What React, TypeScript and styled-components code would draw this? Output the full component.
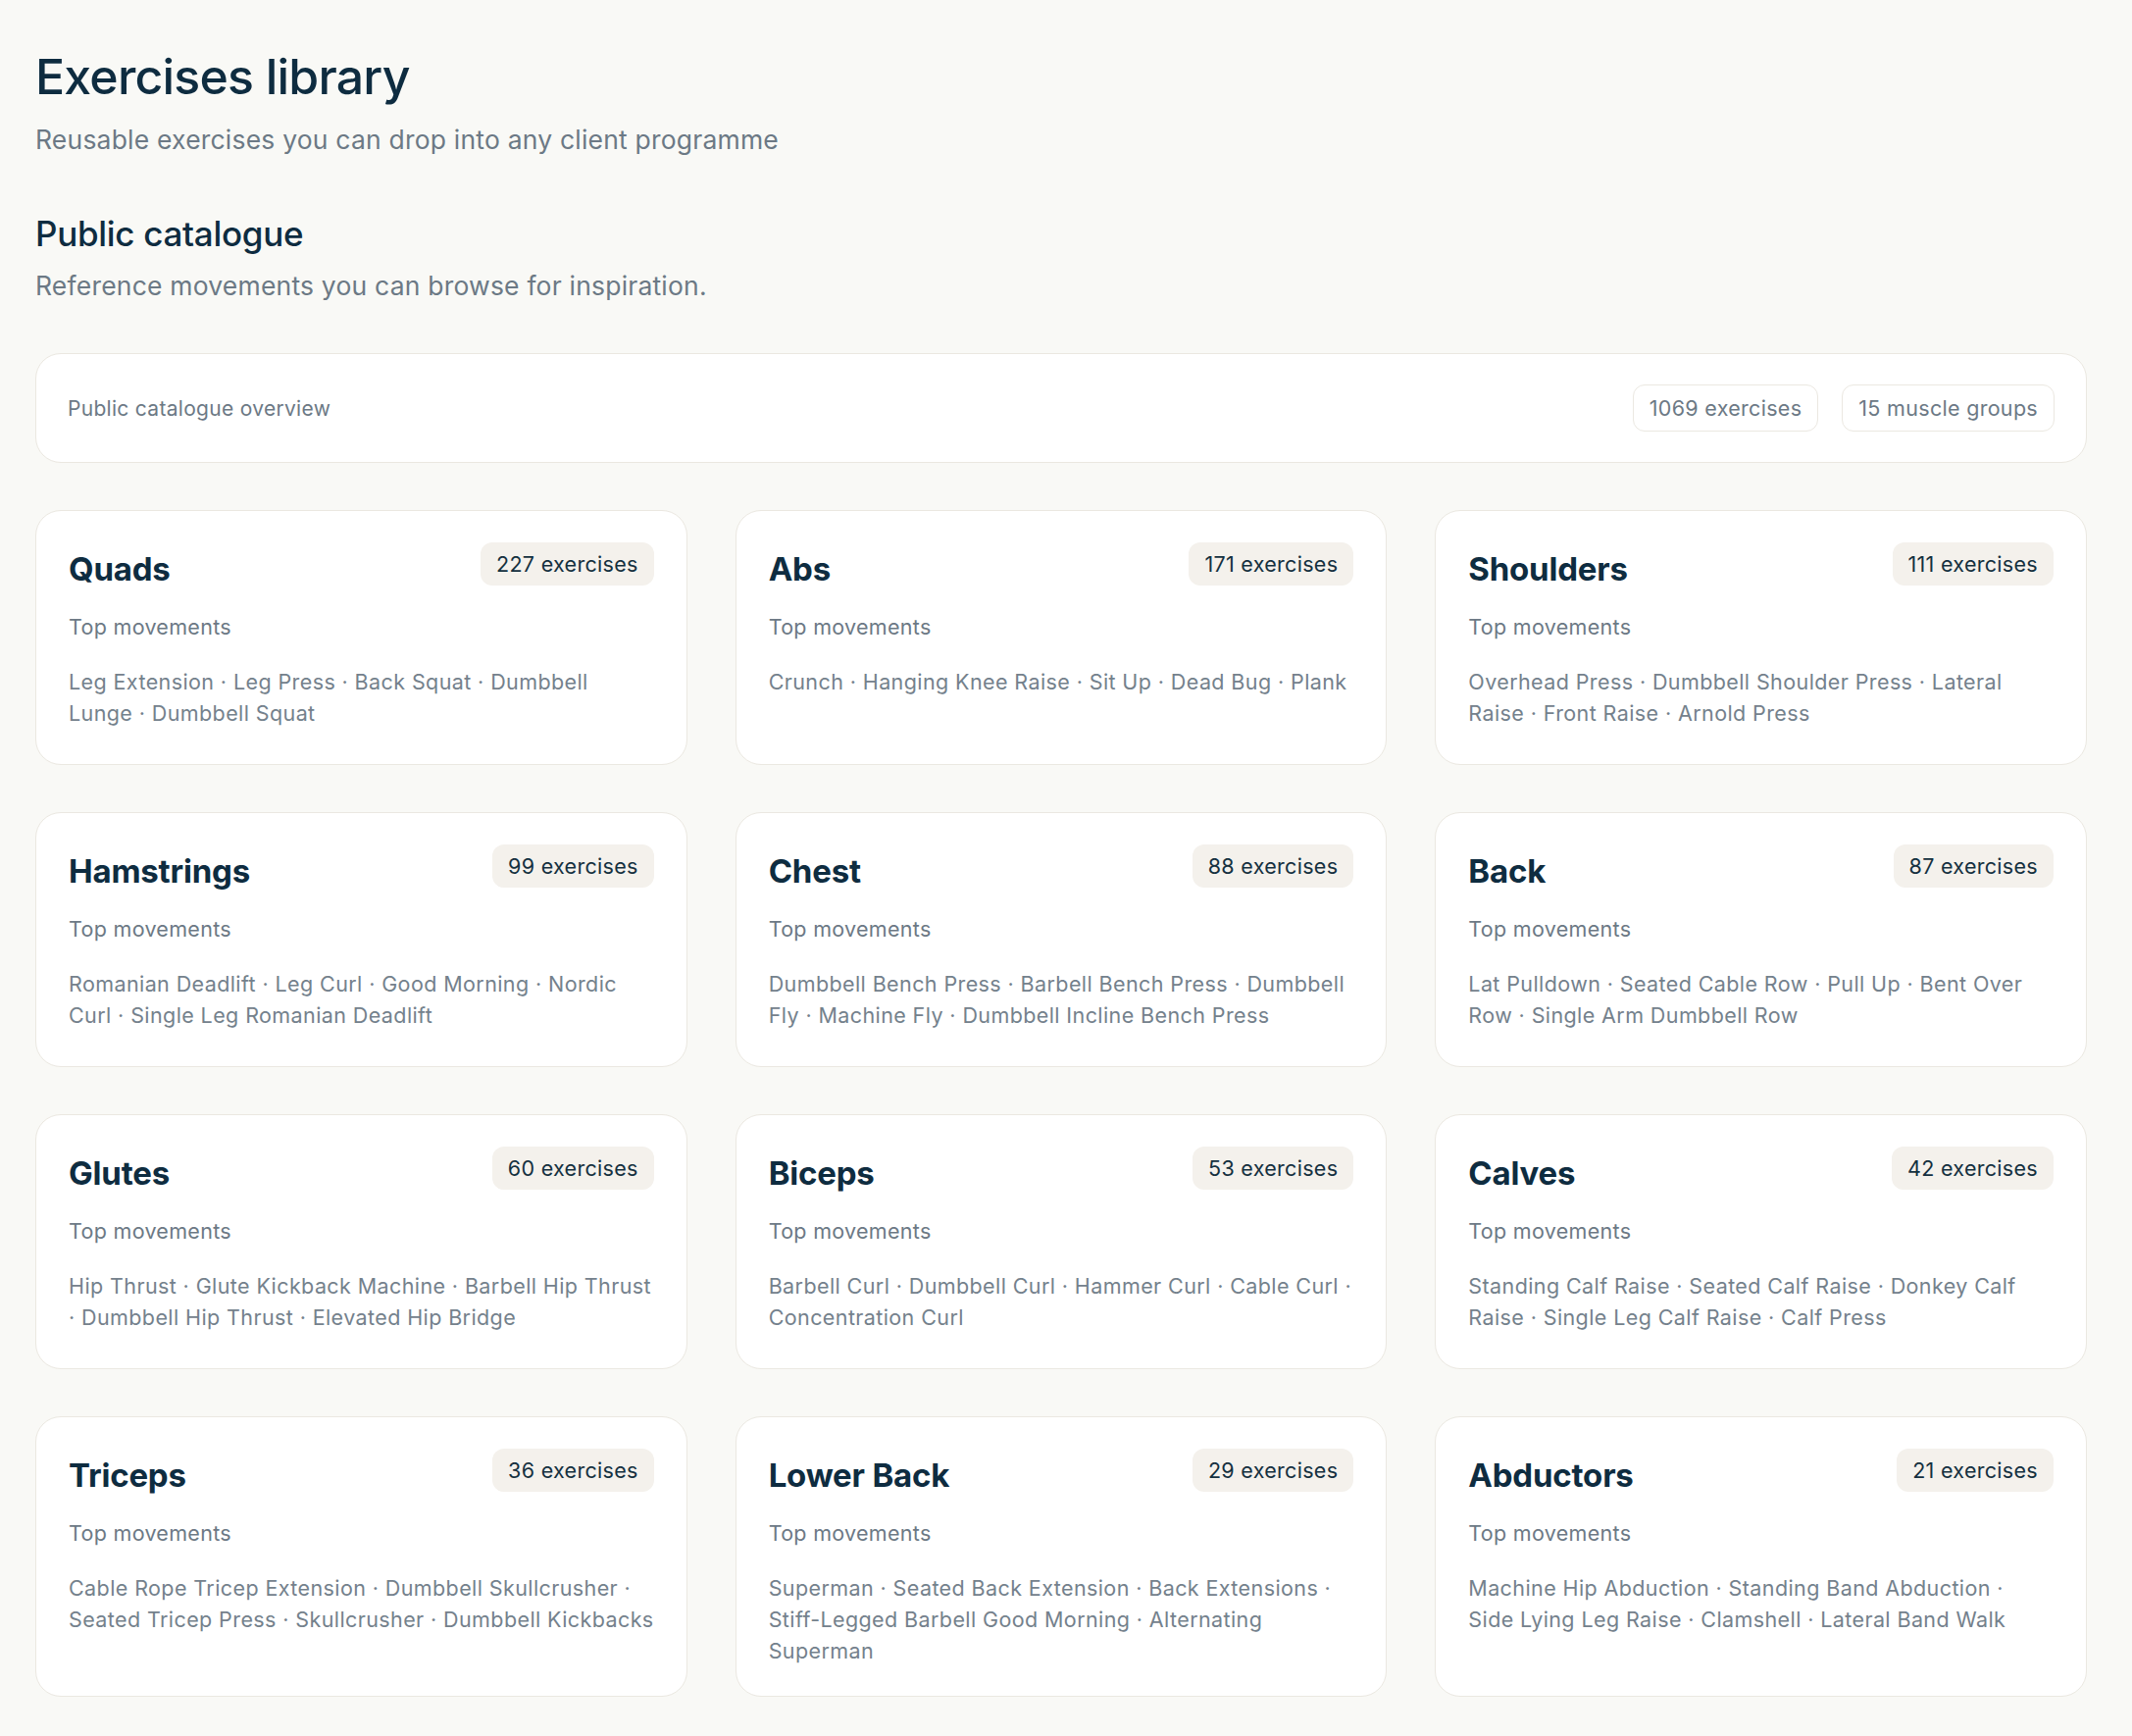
import React from "react";
import styled, { createGlobalStyle } from "styled-components";

const Global = createGlobalStyle`
  html, body { margin: 0; padding: 0; background: #f9f9f6; }
  body { font-family: Inter, "Noto Sans", sans-serif; -webkit-font-smoothing: antialiased; }
`;

const Page = styled.main`
  padding: 46px 46px 40px 36px;
  min-height: 1770px;
  box-sizing: border-box;
`;
const Title = styled.h1`
  margin: 0;
  font-size: 50px;
  line-height: 64px;
  font-weight: 500;
  letter-spacing: -0.8px;
  color: #0e2c40;
`;
const Sub = styled.p<{ $mt: number }>`
  margin: ${(p) => p.$mt}px 0 0;
  font-size: 26.5px;
  line-height: 36px;
  letter-spacing: 0.2px;
  color: #6c7985;
`;
const H2 = styled.h2`
  margin: 55px 0 0;
  font-size: 35px;
  line-height: 46px;
  font-weight: 500;
  letter-spacing: -0.3px;
  color: #0e2c40;
`;
const Overview = styled.section`
  margin-top: 51px;
  background: #fff;
  border: 1.5px solid #ebe8e1;
  border-radius: 26px;
  height: 112px;
  box-sizing: border-box;
  padding: 0 32px;
  display: flex;
  align-items: center;
  justify-content: space-between;
`;
const OverviewLabel = styled.span`
  font-size: 21px;
  letter-spacing: 0.3px;
  color: #6c7985;
`;
const Pills = styled.div`
  display: flex;
  gap: 24px;
`;
const Pill = styled.span`
  border: 1.5px solid #ebe8e1;
  border-radius: 12px;
  height: 46px;
  padding: 0 16px;
  display: flex;
  align-items: center;
  font-size: 21.5px;
  letter-spacing: 0.3px;
  color: #6c7985;
`;
const Grid = styled.div`
  margin-top: 48px;
  display: grid;
  grid-template-columns: repeat(3, 1fr);
  gap: 48px 49px;
`;
const Card = styled.article`
  background: #fff;
  border: 1.5px solid #ebe8e1;
  border-radius: 26px;
  min-height: 260px;
  box-sizing: border-box;
  padding: 32px 33px 30px;
`;
const CardHead = styled.div`
  display: flex;
  justify-content: space-between;
  align-items: flex-start;
`;
const CardTitle = styled.h3`
  margin: 7px 0 0;
  font-size: 33px;
  line-height: 40px;
  font-weight: 700;
  letter-spacing: -0.2px;
  color: #0e2c40;
`;
const Count = styled.span`
  background: #f4f1ec;
  border-radius: 12px;
  height: 44px;
  padding: 0 16px;
  display: flex;
  align-items: center;
  font-size: 21.5px;
  letter-spacing: 0.3px;
  color: #14303f;
`;
const Label = styled.div`
  margin-top: 24px;
  font-size: 21.5px;
  line-height: 30px;
  letter-spacing: 0.3px;
  color: #6c7985;
`;
const Moves = styled.p`
  margin: 25px 0 0;
  font-size: 21.5px;
  line-height: 32px;
  letter-spacing: 0.4px;
  color: #74818c;
`;

const groups: [string, number, string[]][] = [
  ["Quads", 227, ["Leg Extension", "Leg Press", "Back Squat", "Dumbbell Lunge", "Dumbbell Squat"]],
  ["Abs", 171, ["Crunch", "Hanging Knee Raise", "Sit Up", "Dead Bug", "Plank"]],
  ["Shoulders", 111, ["Overhead Press", "Dumbbell Shoulder Press", "Lateral Raise", "Front Raise", "Arnold Press"]],
  ["Hamstrings", 99, ["Romanian Deadlift", "Leg Curl", "Good Morning", "Nordic Curl", "Single Leg Romanian Deadlift"]],
  ["Chest", 88, ["Dumbbell Bench Press", "Barbell Bench Press", "Dumbbell Fly", "Machine Fly", "Dumbbell Incline Bench Press"]],
  ["Back", 87, ["Lat Pulldown", "Seated Cable Row", "Pull Up", "Bent Over Row", "Single Arm Dumbbell Row"]],
  ["Glutes", 60, ["Hip Thrust", "Glute Kickback Machine", "Barbell Hip Thrust", "Dumbbell Hip Thrust", "Elevated Hip Bridge"]],
  ["Biceps", 53, ["Barbell Curl", "Dumbbell Curl", "Hammer Curl", "Cable Curl", "Concentration Curl"]],
  ["Calves", 42, ["Standing Calf Raise", "Seated Calf Raise", "Donkey Calf Raise", "Single Leg Calf Raise", "Calf Press"]],
  ["Triceps", 36, ["Cable Rope Tricep Extension", "Dumbbell Skullcrusher", "Seated Tricep Press", "Skullcrusher", "Dumbbell Kickbacks"]],
  ["Lower Back", 29, ["Superman", "Seated Back Extension", "Back Extensions", "Stiff-Legged Barbell Good Morning", "Alternating Superman"]],
  ["Abductors", 21, ["Machine Hip Abduction", "Standing Band Abduction", "Side Lying Leg Raise", "Clamshell", "Lateral Band Walk"]],
];

export default function App() {
  return (
    <>
      <Global />
      <Page>
        <Title>Exercises library</Title>
        <Sub $mt={14}>Reusable exercises you can drop into any client programme</Sub>
        <H2>Public catalogue</H2>
        <Sub $mt={12}>Reference movements you can browse for inspiration.</Sub>
        <Overview>
          <OverviewLabel>Public catalogue overview</OverviewLabel>
          <Pills>
            <Pill>1069 exercises</Pill>
            <Pill>15 muscle groups</Pill>
          </Pills>
        </Overview>
        <Grid>
          {groups.map(([name, n, moves]) => (
            <Card key={name}>
              <CardHead>
                <CardTitle>{name}</CardTitle>
                <Count>{n} exercises</Count>
              </CardHead>
              <Label>Top movements</Label>
              <Moves>{moves.join(" · ")}</Moves>
            </Card>
          ))}
        </Grid>
      </Page>
    </>
  );
}
